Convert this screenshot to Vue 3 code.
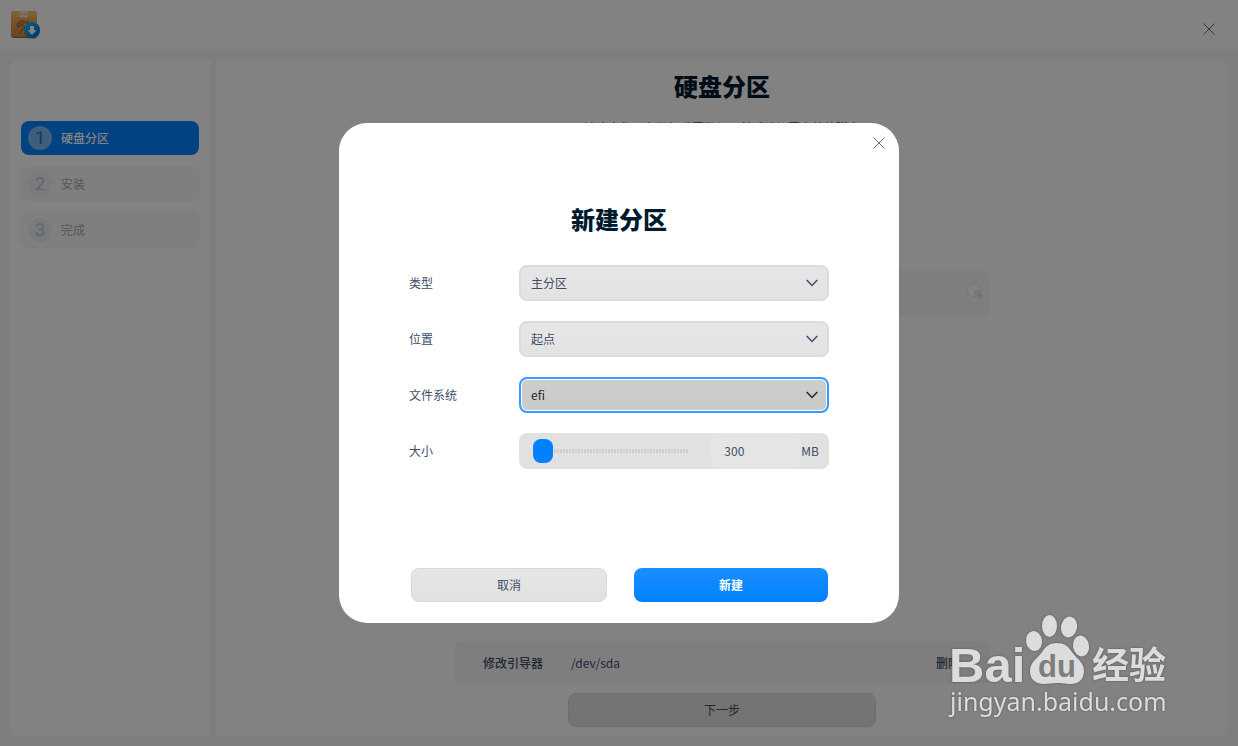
<script setup>
import { ref } from 'vue'

const steps = ['硬盘分区', '安装', '完成']
const current = ref(0)

const kind = ref('主分区')
const place = ref('起点')
const fs = ref('efi')
const size = ref(300)
const max = 40960

const selects = [
  { id: 'kind', label: '类型', model: kind, options: ['主分区', '逻辑分区'] },
  { id: 'place', label: '位置', model: place, options: ['起点', '终点'] },
  { id: 'fs', label: '文件系统', model: fs, options: ['efi', 'ext4', 'swap'], active: true },
]
</script>

<template>
  <div class="window">
    <header class="titlebar">
      <svg class="logo" width="32" height="32" viewBox="0 0 32 32" aria-hidden="true">
        <defs>
          <linearGradient id="box" x1="0" y1="0" x2="0" y2="1">
            <stop offset="0" stop-color="#f3b963" />
            <stop offset="1" stop-color="#d98242" />
          </linearGradient>
          <linearGradient id="disc" x1="0" y1="0" x2="1" y2="1">
            <stop offset="0" stop-color="#12c8e8" />
            <stop offset="1" stop-color="#0b60dc" />
          </linearGradient>
        </defs>
        <rect x="1" y="2" width="26" height="26" rx="3" fill="#9c6440" />
        <rect x="1" y="1" width="26" height="26" rx="3" fill="url(#box)" />
        <path d="M1 7V4a3 3 0 0 1 3-3h20a3 3 0 0 1 3 3v3z" fill="#f8c77c" opacity=".5" />
        <path d="M10 1h8v7l-1.300-1-1.300 1-1.400-1-1.400 1-1.300-1L10 8z" fill="#f4e2c4" />
        <path d="M10 4h8" stroke="#dfba86" />
        <path d="M7 14l5-3 3 1-2 2-2 0-3 3zM11 14l9 9M18 10l-1 4 4 3M18 15l-9 8" fill="none" stroke="#aa713c" stroke-width="1.600" />
        <circle cx="22" cy="21" r="8" fill="#205070" opacity=".4" />
        <circle cx="22" cy="20" r="8" fill="url(#disc)" />
        <path d="M20 16h4v4h2.500L22 25l-4.500-5H20z" fill="#fff" />
      </svg>
      <button class="close" aria-label="关闭窗口">
        <svg width="12" height="12" viewBox="0 0 12 12"><path d="M.5.5l11 11M11.500.5l-11 11" /></svg>
      </button>
    </header>

    <div class="body">
      <nav class="side">
        <ol>
          <li v-for="(s, i) in steps" :key="s" :class="{ on: i === current }">
            <span class="num">{{ i + 1 }}</span>{{ s }}
          </li>
        </ol>
      </nav>

      <main class="main">
        <h1>硬盘分区</h1>
        <p class="hint">请确定您已备份好重要数据，然后选择要安装的磁盘</p>
        <div class="disk">
          <svg width="16" height="16" viewBox="0 0 16 16" aria-hidden="true">
            <circle cx="7" cy="7" r="6.500" fill="#fff" stroke="#e6e6e6" />
            <rect x="8" y="8" width="5" height="5" fill="#f2f2f2" stroke="#dedede" />
            <path d="M12.500 9v6M9.500 12h6" stroke="#dedede" stroke-width="2" />
          </svg>
        </div>
        <div class="boot">
          <span class="boot-label">修改引导器</span>
          <span class="boot-dev">/dev/sda</span>
          <button class="remove">删除</button>
        </div>
        <button class="btn next">下一步</button>
      </main>
    </div>

    <div class="mask">
      <form class="dialog" role="dialog" aria-labelledby="dialog-title" @submit.prevent>
        <div class="dialog-top">
          <button type="button" class="close" aria-label="关闭">
            <svg width="12" height="12" viewBox="0 0 12 12"><path d="M.5.5l11 11M11.500.5l-11 11" /></svg>
          </button>
        </div>
        <h2 id="dialog-title">新建分区</h2>

        <div class="fields">
          <template v-for="f in selects" :key="f.id">
            <label :for="f.id">{{ f.label }}</label>
            <div class="select" :class="{ active: f.active }">
              <select :id="f.id" v-model="f.model.value">
                <option v-for="o in f.options" :key="o">{{ o }}</option>
              </select>
              <svg width="12" height="8" viewBox="0 0 12 8" aria-hidden="true"><path d="M.7 1L6 6.500 11.300 1" /></svg>
            </div>
          </template>

          <label for="size">大小</label>
          <div class="size">
            <input id="size" v-model.number="size" type="range" min="300" :max="max" />
            <input v-model.number="size" class="amount" type="text" aria-label="大小 (MB)" />
            <span class="unit">MB</span>
          </div>
        </div>

        <div class="actions">
          <button type="button" class="btn">取消</button>
          <button type="submit" class="btn primary">新建</button>
        </div>
      </form>
    </div>

    <svg class="mark" width="240" height="120" viewBox="0 0 240 120" aria-label="Baidu 经验">
      <g class="mark-ink">
        <text x="5" y="72" class="mark-big">Bai</text>
        <ellipse cx="90" cy="31" rx="8" ry="10" transform="rotate(-10 90 31)" />
        <ellipse cx="105.500" cy="16" rx="7.500" ry="11" />
        <ellipse cx="125" cy="17" rx="8" ry="10.500" transform="rotate(12 125 17)" />
        <ellipse cx="137" cy="36" rx="8" ry="10.500" transform="rotate(-10 137 36)" />
        <path d="M113 33c7 0 11 3 15 9 5 7 12 10 12 19 0 8-5 13-13 13-6 0-9-1-14-1s-8 1-13 1c-9 0-14-5-14-13 0-9 7-12 12-19 4-6 8-9 15-9z" />
        <text x="148" y="69" class="mark-cn">经验</text>
        <text x="6" y="101" class="mark-url">jingyan.baidu.com</text>
      </g>
      <text x="94" y="67" class="mark-du">du</text>
    </svg>
  </div>
</template>

<style>
body {
  margin: 0;
}
</style>

<style scoped>
.window {
  position: relative;
  display: flex;
  flex-direction: column;
  min-height: 100vh;
  background: #f7f7f7;
  color: #414d68;
  font: 12px/18px "Noto Sans CJK SC", "Noto Sans", sans-serif;
}
.window * {
  box-sizing: border-box;
}
button,
input,
select {
  font: inherit;
  color: inherit;
  border: 0;
  margin: 0;
  padding: 0;
  background: none;
}
.titlebar {
  display: flex;
  justify-content: space-between;
  height: 50px;
  padding: 10px 20px 0 10px;
  background: #fff;
}
.close {
  display: grid;
  place-items: center;
  width: 18px;
  height: 18px;
}
.titlebar .close {
  margin-top: 10px;
}
.close svg {
  fill: none;
  stroke: #626b8c;
}
.body {
  flex: 1;
  display: flex;
  gap: 6px;
  padding: 10px;
}
.side,
.main {
  background: #fff;
  border-radius: 8px;
}
.side {
  flex: 0 0 200px;
  border-radius: 8px 0 0 8px;
}
.side ol {
  list-style: none;
  display: flex;
  flex-direction: column;
  gap: 12px;
  margin: 0;
  padding: 61px 11px 0;
}
.side li {
  display: flex;
  align-items: center;
  gap: 9px;
  height: 34px;
  padding-left: 7px;
  border-radius: 8px;
  background: #fafafa;
  box-shadow: 0 0 0 1px #f8f8f8;
  color: #a6a9b2;
}
.num {
  width: 24px;
  border-radius: 50%;
  background: #eeeff5;
  color: #c2c7da;
  font: 19px/24px Roboto, sans-serif;
  text-align: center;
}
.side .on {
  background: #0081ff;
  box-shadow: none;
  color: #fff;
  font-weight: 500;
}
.on .num {
  background: #7cb8f4;
  color: #2f6cc0;
}
.main {
  flex: 1;
  display: flex;
  flex-direction: column;
  align-items: center;
  padding-bottom: 9px;
  border-radius: 0 8px 8px 0;
}
h1,
h2 {
  margin: 0;
  color: #001a2e;
  font-size: 24px;
  line-height: 36px;
  font-weight: 900;
  text-align: center;
}
h1 {
  padding-top: 8px;
}
.hint {
  margin: 15px 0 0;
}
.disk,
.boot {
  display: flex;
  align-items: center;
  width: 534px;
  max-width: 100%;
  border-radius: 6px;
  background: #f8f8f8;
}
.disk {
  justify-content: flex-end;
  height: 46px;
  margin-top: 133px;
  padding: 0 6px 4px 0;
}
.boot {
  height: 42px;
  margin-top: auto;
  padding: 0 29px 0 28px;
  font-weight: 500;
}
.boot-dev {
  margin-left: 28px;
  font-weight: 400;
}
.remove {
  margin-left: auto;
}
.btn {
  height: 34px;
  border: 1px solid #d8d8d8;
  border-radius: 8px;
  background: linear-gradient(#e6e6e6, #e1e1e1);
}
.next {
  width: 308px;
  margin-top: 9px;
}
.mask {
  position: absolute;
  inset: 0;
  display: grid;
  place-items: center;
  background: rgba(0, 0, 0, 0.49);
}
.dialog {
  width: 560px;
  min-height: 500px;
  display: flex;
  flex-direction: column;
  padding: 0 70px 21px;
  border-radius: 28px;
  background: #fff;
}
.dialog-top {
  display: flex;
  justify-content: flex-end;
  height: 78px;
  padding-top: 11px;
  margin-right: -59px;
}
.fields {
  display: grid;
  grid-template-columns: 110px 1fr;
  grid-auto-rows: 36px;
  row-gap: 20px;
  align-items: center;
  margin-top: 28px;
}
.select {
  display: grid;
  align-items: center;
  height: 36px;
}
.select > * {
  grid-area: 1 / 1;
}
select {
  appearance: none;
  width: 100%;
  height: 36px;
  padding: 0 10px;
  border: 2px solid #dcdcdc;
  border-radius: 8px;
  background: linear-gradient(#e6e6e6, #e3e3e3);
  outline: 0;
}
.select svg {
  justify-self: end;
  margin-right: 11px;
  fill: none;
  stroke: #414d68;
  stroke-width: 1.5;
  pointer-events: none;
}
.active select {
  border-color: #349cff;
  box-shadow: inset 0 0 0 1px #fff;
  background: linear-gradient(#cdcdcd, #cacaca);
  color: #22252e;
}
.active svg {
  stroke: #22252e;
}
.size {
  display: flex;
  align-items: center;
  height: 36px;
  padding: 0 10px 0 14px;
  border-radius: 8px;
  background: #e1e1e1;
}
input[type="range"] {
  appearance: none;
  flex: 1;
  min-width: 0;
  height: 24px;
  background: repeating-linear-gradient(90deg, #cecece 0 2px, #e1e1e1 2px 3px) center / 100% 4px no-repeat;
}
input[type="range"]::-webkit-slider-thumb {
  appearance: none;
  width: 20px;
  height: 24px;
  border-radius: 8px;
  background: #0081ff;
}
.amount {
  width: 90px;
  height: 36px;
  margin-left: 23px;
  padding: 0 0 2px 13px;
  border-radius: 8px;
  background: #e5e5e5;
}
.actions {
  display: flex;
  gap: 27px;
  margin-top: auto;
  padding: 0 1px 0 2px;
}
.actions .btn {
  flex: 1 1 0;
}
.actions .primary {
  border: 0;
  background: linear-gradient(#1a8fff, #0081ff);
  color: #fff;
  font-weight: 700;
}
.mark {
  position: absolute;
  right: 54px;
  bottom: 16px;
  pointer-events: none;
}
.mark-ink {
  fill: #dcdcdc;
  filter: drop-shadow(0 0 1px #555);
}
.mark-big {
  font: 700 49px "Liberation Sans", sans-serif;
}
.mark-cn {
  font: 700 37px "Noto Sans CJK SC", sans-serif;
}
.mark-url {
  font: 25px "Noto Sans", sans-serif;
}
.mark-du {
  fill: #7e7e7e;
  font: 700 31px "Liberation Sans", sans-serif;
}
</style>
